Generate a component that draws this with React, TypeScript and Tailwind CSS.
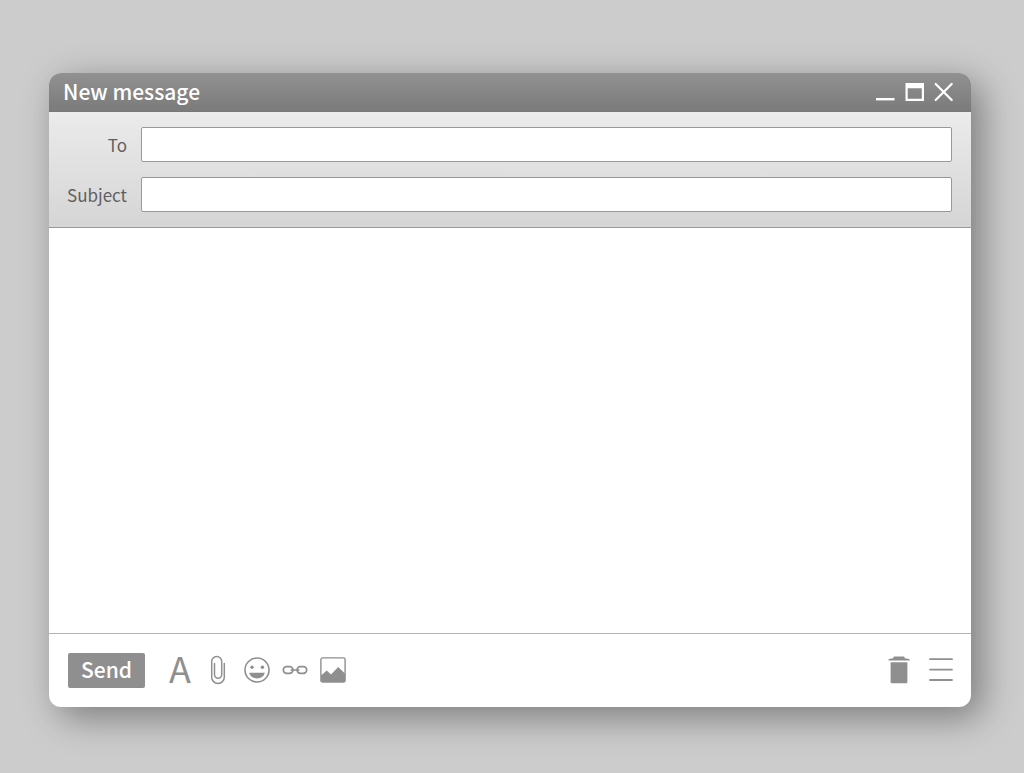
import React, { useState } from "react";

type IconButtonProps = {
  label: string;
  children: React.ReactNode;
};

function IconButton({ label, children }: IconButtonProps) {
  return (
    <button
      type="button"
      aria-label={label}
      className="flex h-8 w-[26px] shrink-0 items-center justify-center"
    >
      {children}
    </button>
  );
}

function PaperclipIcon() {
  return (
    <svg width="26" height="32" viewBox="0 0 26 32" fill="none" stroke="currentColor" strokeWidth="1.5" strokeLinecap="round">
      <path d="M19.3 9.4V23.2a6.3 6.3 0 0 1-12.6 0V7.6a5 5 0 0 1 10 0V20.6a3.6 3.6 0 0 1-7.2 0V9.4" />
    </svg>
  );
}

function SmileIcon() {
  return (
    <svg width="26" height="26" viewBox="0 0 26 26" fill="currentColor">
      <circle cx="13" cy="13" r="12" fill="none" stroke="currentColor" strokeWidth="1.6" />
      <circle cx="8" cy="10.2" r="1.7" />
      <circle cx="18.4" cy="10.2" r="1.7" />
      <path d="M5.2 15.8h15.6c-.8 3.600-3.900 5.600-7.800 5.600S6 19.400 5.200 15.800z" />
    </svg>
  );
}

function LinkIcon() {
  return (
    <svg width="26" height="26" viewBox="0 0 26 26" fill="none" stroke="currentColor" strokeWidth="1.7" strokeLinecap="round">
      <rect x="1.3" y="9.7" width="9.6" height="6.6" rx="3.3" />
      <rect x="15.1" y="9.7" width="9.6" height="6.6" rx="3.3" />
      <path d="M9.2 13h7.6" />
    </svg>
  );
}

function PictureIcon() {
  return (
    <svg width="26" height="26" viewBox="0 0 26 26" fill="currentColor">
      <rect x="0.9" y="0.9" width="24.2" height="24.2" rx="1.7" fill="none" stroke="currentColor" strokeWidth="1.4" />
      <path d="M1 18.5L6.800 13.600l4.200 4 7.200-7.600L25 16.500V25H1z" />
    </svg>
  );
}

function TrashIcon() {
  return (
    <svg width="22" height="28" viewBox="0 0 22 28" fill="currentColor">
      <path d="M6.5 0.500h9a1 1 0 0 1 1 .8l.4.900 4.100.9c.500.100.700.500.700 1.400H.500c0-.900.200-1.300.700-1.400l3.900-.9.400-.900a1 1 0 0 1 1-.8z" />
      <path d="M2.6 6.300h16.800V26a1.200 1.200 0 0 1-1.200 1.200H3.800A1.200 1.200 0 0 1 2.600 26z" />
    </svg>
  );
}

function MenuIcon() {
  return (
    <svg width="24" height="24" viewBox="0 0 24 24" fill="none" stroke="currentColor" strokeWidth="1.8" strokeLinecap="round">
      <path d="M1 1.200h22M1 11.600h22M1 22h22" />
    </svg>
  );
}

type FieldProps = {
  id: string;
  label: string;
  value: string;
  onChange: (value: string) => void;
};

function Field({ id, label, value, onChange }: FieldProps) {
  return (
    <div className="flex items-center gap-[14px]">
      <label htmlFor={id} className="w-[78px] shrink-0 text-right text-[17px] leading-6 text-[#5f5f5f]">
        {label}
      </label>
      <input
        id={id}
        type="text"
        value={value}
        onChange={(event) => onChange(event.target.value)}
        className="h-[35px] min-w-0 flex-1 rounded-xs border border-[#999999] bg-white px-2 text-lg text-[#555555] outline-none"
      />
    </div>
  );
}

export default function App() {
  const [to, setTo] = useState("");
  const [subject, setSubject] = useState("");
  const [body, setBody] = useState("");

  return (
    <div className="flex min-h-screen bg-[#cccccc] pt-[73px] pr-[53px] pb-[66px] pl-[49px] font-['Noto_Sans_CJK_SC',sans-serif]">
      <main className="flex min-w-0 flex-1 flex-col overflow-hidden rounded-xl bg-white shadow-[10px_10px_36px_rgba(0,0,0,0.4)]">
        <header className="flex h-[39px] shrink-0 items-center justify-between border-b border-[#777777] bg-linear-to-b from-[#919191] to-[#7b7b7b] pr-[17px] pl-[14px] text-white">
          <h1 className="pb-[2px] text-[21px] leading-7 font-medium">New message</h1>
          <div className="flex items-center gap-[9px]">
            <button type="button" aria-label="Minimize" className="flex">
              <svg width="20" height="20" viewBox="0 0 20 20" fill="currentColor">
                <rect x="0" y="16" width="18.5" height="2.4" />
              </svg>
            </button>
            <button type="button" aria-label="Maximize" className="flex">
              <svg width="20" height="20" viewBox="0 0 20 20" fill="currentColor" fillRule="evenodd">
                <path d="M.5 1H19v18H.5zM2.7 6.2v10.600h14.100V6.200z" />
              </svg>
            </button>
            <button type="button" aria-label="Close" className="flex">
              <svg width="20" height="20" viewBox="0 0 20 20" fill="none" stroke="currentColor" strokeWidth="2.2" strokeLinecap="round">
                <path d="M1.7 2l16 16M17.7 2l-16 16" />
              </svg>
            </button>
          </div>
        </header>

        <div className="flex shrink-0 flex-col gap-[15px] border-b border-[#999999] bg-linear-to-b from-[#ebebeb] to-[#d5d5d5] py-[15px] pr-[19px]">
          <Field id="to" label="To" value={to} onChange={setTo} />
          <Field id="subject" label="Subject" value={subject} onChange={setSubject} />
        </div>

        <textarea
          aria-label="Message"
          value={body}
          onChange={(event) => setBody(event.target.value)}
          className="min-h-0 w-full flex-1 resize-none bg-white p-4 text-lg text-[#555555] outline-none"
        />

        <footer className="flex h-[74px] shrink-0 items-center justify-between border-t border-[#b3b3b3] pr-[17px] pb-px pl-[19px] text-[#8f8f8f]">
          <div className="flex items-center gap-[22px]">
            <button type="submit" className="h-[35px] w-[77px] rounded-xs bg-[#8f8f8f] pb-[2px] text-[21px] leading-7 font-medium text-white">
              Send
            </button>
            <div className="flex w-[179px] items-center justify-between">
              <button type="button" aria-label="Text formatting" className="flex h-8 w-[26px] items-center justify-center pb-[6px] text-4xl leading-8">
                A
              </button>
              <IconButton label="Attach file"><PaperclipIcon /></IconButton>
              <IconButton label="Insert emoji"><SmileIcon /></IconButton>
              <IconButton label="Insert link"><LinkIcon /></IconButton>
              <IconButton label="Insert picture"><PictureIcon /></IconButton>
            </div>
          </div>
          <div className="flex items-center gap-4">
            <IconButton label="Delete"><TrashIcon /></IconButton>
            <IconButton label="More options"><MenuIcon /></IconButton>
          </div>
        </footer>
      </main>
    </div>
  );
}
